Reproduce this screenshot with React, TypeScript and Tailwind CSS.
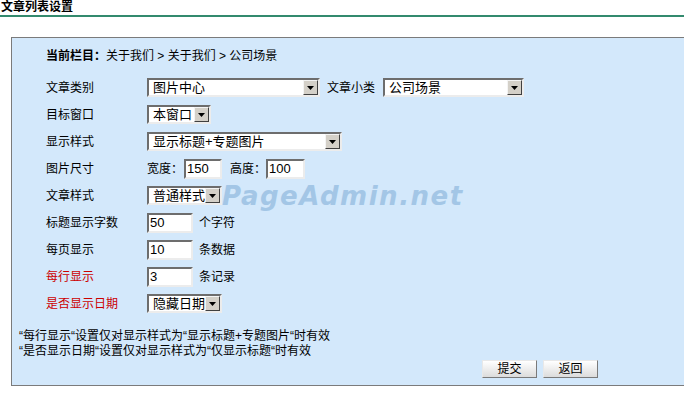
import type { ReactNode } from "react";

const cjk = "font-['Liberation_Sans','Noto_Sans_CJK_SC',sans-serif]";

function Arrow() {
  return (
    <span className="flex h-[15px] w-[15px] shrink-0 items-center justify-center border border-t-[#f4f4f4] border-l-[#f4f4f4] border-b-[#404040] border-r-[#404040] bg-[#d4d0c8]">
      <svg width="7" height="4" viewBox="0 0 7 4">
        <path d="M0 0h7L3.5 4z" fill="#000" />
      </svg>
    </span>
  );
}

function Select({ value, width }: { value: string; width: number }) {
  return (
    <div
      className="flex h-[19px] shrink-0 items-center border-2 border-t-[#6d6d6d] border-l-[#6d6d6d] border-b-[#ececec] border-r-[#ececec] bg-white"
      style={{ width }}
    >
      <span className="flex-1 whitespace-nowrap pl-[4px] text-[13px] leading-[15px] text-black">{value}</span>
      <Arrow />
    </div>
  );
}

function Input({ value, width }: { value: string; width: number }) {
  return (
    <div
      className="flex h-[20px] shrink-0 items-center border-2 border-t-[#6d6d6d] border-l-[#6d6d6d] border-b-[#ececec] border-r-[#ececec] bg-white pl-[1px] text-[13px] leading-[15px] text-black"
      style={{ width }}
    >
      {value}
    </div>
  );
}

function Row({ label, red, children }: { label: string; red?: boolean; children: ReactNode }) {
  return (
    <div className="flex h-[27px] items-center">
      <div className={`w-[101px] shrink-0 text-[12px] leading-[14px] ${red ? "text-[#cc0000]" : "text-black"}`}>{label}</div>
      <div className="flex items-center">{children}</div>
    </div>
  );
}

function Button({ children }: { children: ReactNode }) {
  return (
    <button
      type="button"
      className="flex h-[18px] w-[55px] items-center justify-center border border-t-[#e8e8e8] border-l-[#e8e8e8] border-b-[#7a7a7a] border-r-[#7a7a7a] bg-gradient-to-b from-[#ffffff] to-[#dcdcdc] text-[12px] leading-[14px] text-black"
    >
      {children}
    </button>
  );
}

export default function App() {
  return (
    <div className={`relative h-[396px] w-[684px] overflow-hidden bg-white text-[12px] text-black ${cjk}`}>
      <div className="h-[15px] pl-[1px] text-[12px] font-bold leading-[14px]">文章列表设置</div>
      <div className="h-[2px] bg-[#338a6e]" />
      <div className="h-[20px]" />
      <div className="ml-[11px] h-[349px] w-[700px] border border-[#7b7b7b] bg-[#d3e8fb]">
        <div className="pl-[34px] pt-[11px]">
          <div className="h-[14px] text-[12px] leading-[14px]">
            <span className="font-bold">当前栏目：</span>关于我们 &gt; 关于我们 &gt; 公司场景
          </div>
          <div className="h-[11px]" />
          <Row label="文章类别">
            <Select value="图片中心" width={173} />
            <span className="ml-[7px] mr-[8px]">文章小类</span>
            <Select value="公司场景" width={141} />
          </Row>
          <Row label="目标窗口">
            <Select value="本窗口" width={64} />
          </Row>
          <Row label="显示样式">
            <Select value="显示标题+专题图片" width={195} />
          </Row>
          <Row label="图片尺寸">
            <span className="w-[37px]">宽度：</span>
            <Input value="150" width={38} />
            <span className="ml-[8px] w-[36px]">高度：</span>
            <Input value="100" width={39} />
          </Row>
          <Row label="文章样式">
            <Select value="普通样式" width={75} />
          </Row>
          <Row label="标题显示字数">
            <Input value="50" width={46} />
            <span className="ml-[6px]">个字符</span>
          </Row>
          <Row label="每页显示">
            <Input value="10" width={46} />
            <span className="ml-[6px]">条数据</span>
          </Row>
          <Row label="每行显示" red>
            <Input value="3" width={46} />
            <span className="ml-[6px]">条记录</span>
          </Row>
          <Row label="是否显示日期" red>
            <Select value="隐藏日期" width={75} />
          </Row>
        </div>
        <div className="mt-[12px] pl-[7px] text-[12px] leading-[15px]">
          <div>“每行显示“设置仅对显示样式为“显示标题+专题图片“时有效</div>
          <div>“是否显示日期“设置仅对显示样式为“仅显示标题“时有效</div>
        </div>
        <div className="mt-[1px] flex gap-[6px] pl-[470px]">
          <Button>提交</Button>
          <Button>返回</Button>
        </div>
      </div>
      <div className="pointer-events-none absolute left-[222px] top-[181px] font-['DejaVu_Sans',sans-serif] text-[26px] font-bold italic leading-[30px] tracking-[1.5px] text-[#a3c6e6]">
        PageAdmin.net
      </div>
    </div>
  );
}
